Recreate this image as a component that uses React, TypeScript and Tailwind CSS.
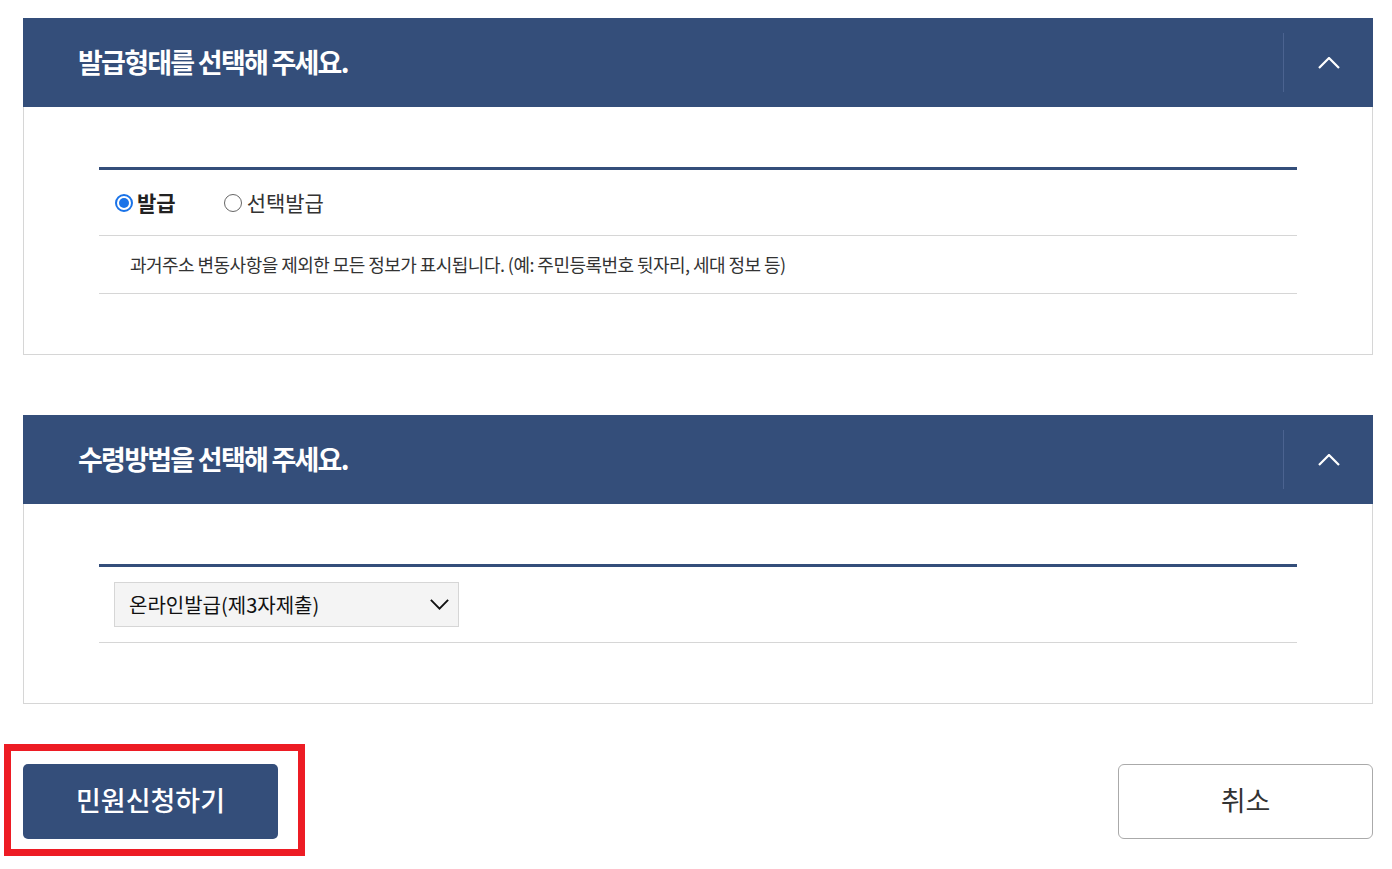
import React from "react";

const font = { fontFamily: '"Noto Sans CJK KR", "Noto Sans", sans-serif' };

const Chevron = ({ up, size = 22 }: { up?: boolean; size?: number }) => (
  <svg width={size} height={size / 2 + 1} viewBox="0 0 22 12" fill="none">
    <path
      d={up ? "M1 11L11 1L21 11" : "M1 1L11 11L21 1"}
      stroke="currentColor"
      strokeWidth="2.2"
    />
  </svg>
);

const PanelHeader = ({ title }: { title: string }) => (
  <div className="flex h-[89px] items-center bg-[#344e7a]">
    <h2 className="flex-1 pl-[55px] text-[27px] font-bold tracking-[-0.065em] text-white">
      {title}
    </h2>
    <div className="h-[59px] w-px bg-[#4b6390]" />
    <button className="flex h-full w-[89px] items-center justify-center text-white">
      <Chevron up />
    </button>
  </div>
);

const App = () => {
  return (
    <div className="min-h-[869px] bg-white pt-[18px]" style={font}>
      <div className="ml-[23px] w-[1350px]">
        <section>
          <PanelHeader title="발급형태를 선택해 주세요." />
          <div className="border border-t-0 border-[#d6d6d6] px-[75px] pb-[60px] pt-[60px]">
            <div className="border-t-[3px] border-[#344e7a]">
              <div className="flex h-[66px] items-center gap-[48px] border-b border-[#d6d6d6] pl-[16px]">
                <label className="flex items-center gap-[4px] text-[21px] font-bold text-[#222]">
                  <span className="flex h-[18px] w-[18px] items-center justify-center rounded-full border-2 border-[#1a73e8]">
                    <span className="h-[10px] w-[10px] rounded-full bg-[#1a73e8]" />
                  </span>
                  발급
                </label>
                <label className="flex items-center gap-[5px] text-[21px] text-[#333]">
                  <span className="h-[18px] w-[18px] rounded-full border-[1.5px] border-[#666]" />
                  선택발급
                </label>
              </div>
              <p className="flex h-[58px] items-center border-b border-[#d6d6d6] pl-[31px] text-[18px] tracking-[-0.03em] text-[#333]">
                과거주소 변동사항을 제외한 모든 정보가 표시됩니다. (예: 주민등록번호 뒷자리, 세대 정보 등)
              </p>
            </div>
          </div>
        </section>

        <section className="mt-[60px]">
          <PanelHeader title="수령방법을 선택해 주세요." />
          <div className="border border-t-0 border-[#d6d6d6] px-[75px] pb-[60px] pt-[60px]">
            <div className="border-t-[3px] border-[#344e7a]">
              <div className="flex h-[76px] items-center border-b border-[#d6d6d6] pl-[15px]">
                <div className="flex h-[45px] w-[345px] items-center justify-between border border-[#d6d6d6] bg-[#f4f4f4] pl-[14px] pr-[8px] text-[20px] text-[#111]">
                  <span>온라인발급(제3자제출)</span>
                  <span className="pr-[1px] text-[#111]">
                    <Chevron size={19} />
                  </span>
                </div>
              </div>
            </div>
          </div>
        </section>

        <div className="mt-[60px] flex justify-between">
          <div className="relative">
            <button className="flex h-[75px] w-[255px] items-center justify-center rounded-[5px] bg-[#344e7a] pb-[3px] text-[27px] font-medium text-white">
              민원신청하기
            </button>
            <div className="pointer-events-none absolute left-[-19px] top-[-20px] h-[112px] w-[301px] border-[7px] border-[#ed1c24]" />
          </div>
          <button className="flex h-[75px] w-[255px] items-center justify-center rounded-[6px] border border-[#aaa] bg-white pb-[3px] text-[27px] text-[#333]">
            취소
          </button>
        </div>
      </div>
    </div>
  );
};

export default App;
